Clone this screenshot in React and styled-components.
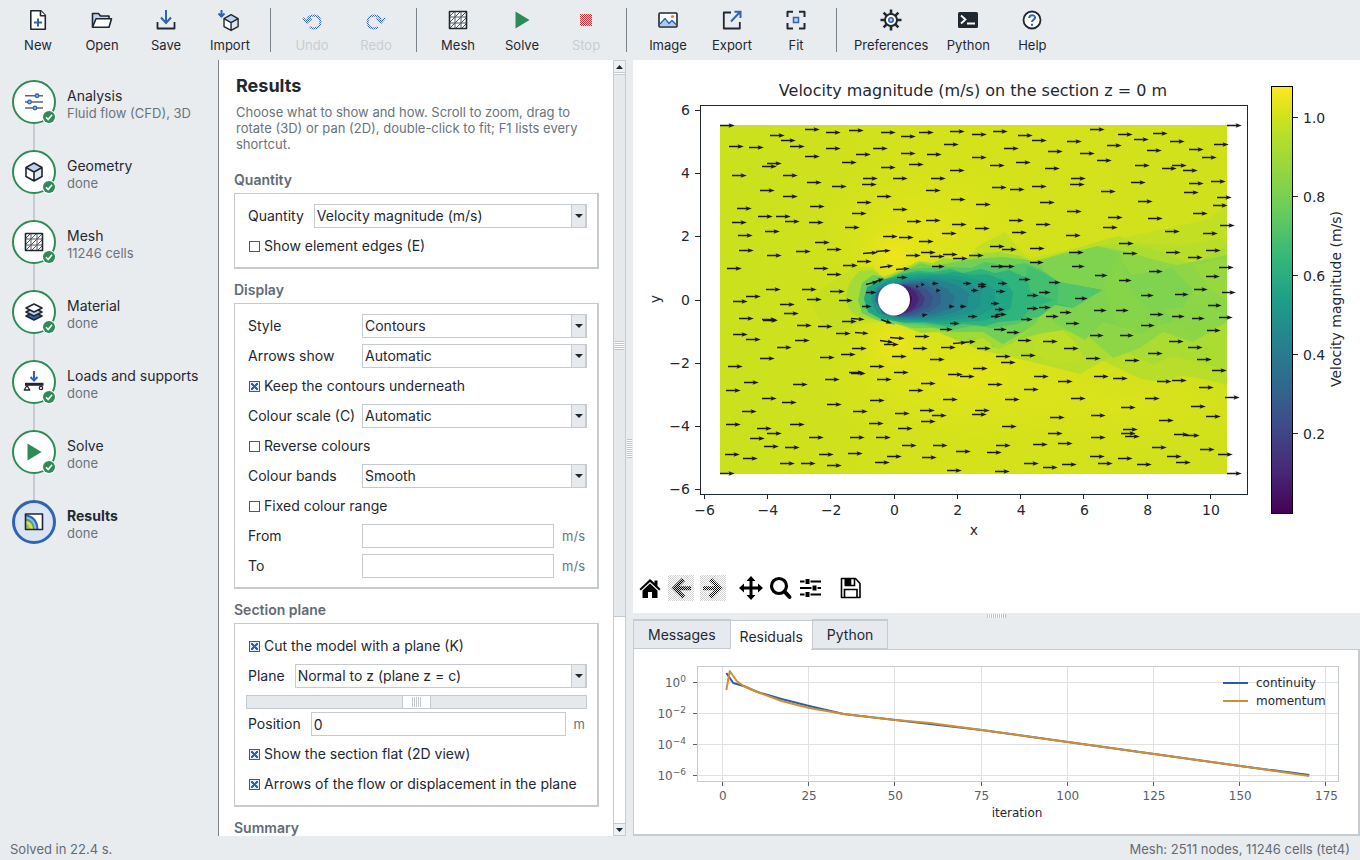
import React, { useId, useState } from 'react';
import styled, { createGlobalStyle, css } from 'styled-components';

const c = {
  bg: '#e9ecef',
  ink: '#1f2830',
  muted: '#6a737c',
  line: '#c6cbd0',
  blue: '#2f63b3',
  green: '#2e8b57',
  pale: '#bfd2f0',
};

const GlobalStyle = createGlobalStyle`
  * { box-sizing: border-box; }
  body {
    margin: 0;
    background: ${c.bg};
    color: ${c.ink};
    font-family: Inter, "Liberation Sans", sans-serif;
    font-size: 14px;
    line-height: 20px;
  }
  button, input, select { font: inherit; color: inherit; }
`;

const Shell = styled.div`
  display: flex;
  flex-direction: column;
  height: 100vh;
  overflow: hidden;
`;

const Toolbar = styled.header`
  display: flex;
  flex: none;
  height: 60px;
  padding-left: 6px;
`;

const ToolButton = styled.button`
  display: flex;
  flex-direction: column;
  align-items: center;
  min-width: 64px;
  padding: 8px 8px 0;
  border: 0;
  background: none;
  font-size: 13px;
  line-height: 26px;

  &:disabled { color: #c8cdd2; }
`;

const ToolRule = styled.span`
  width: 2px;
  height: 44px;
  margin: 8px 8px 0;
  border-left: 1px solid #7b838a;
`;

const Body = styled.div`
  display: flex;
  flex: 1;
  min-height: 0;
`;

const Steps = styled.nav`
  flex: none;
  width: 219px;
  padding: 7px 0 0 12px;
  border-right: 1px solid #7f8589;
`;

const Step = styled.a`
  position: relative;
  display: flex;
  align-items: center;
  height: 70px;
  gap: 11px;
  color: inherit;
  text-decoration: none;

  /* link to the next step */
  &:not(:last-child)::after {
    content: "";
    position: absolute;
    left: 21px;
    top: 57px;
    width: 2px;
    height: 26px;
    background: #c6cbd1;
  }
`;

const Disc = styled.span`
  position: relative;
  display: grid;
  place-items: center;
  flex: none;
  width: 44px;
  height: 44px;
  border: 2px solid ${c.green};
  border-radius: 50%;
  background: #fff;

  ${p => p.$current && css`
    border: 3px solid ${c.blue};
    background: #dbe4f3;
  `}
`;

const Badge = styled.svg`
  position: absolute;
  right: -2px;
  bottom: -2px;
`;

const StepText = styled.span`
  padding-top: 3px;
`;

const StepName = styled.span`
  display: block;
  line-height: 18px;
  font-weight: ${p => (p.$current ? 700 : 400)};
`;

const StepNote = styled.span`
  display: block;
  line-height: 16px;
  font-size: 13px;
  color: ${c.muted};
`;

const Panel = styled.section`
  flex: none;
  width: 394px;
  padding: 14px 14px 0 15px;
  overflow: hidden;
  background: #fff;
`;

const PanelTitle = styled.h1`
  margin: 0 2px 6px;
  font-size: 18px;
  font-weight: 700;
  line-height: 24px;
`;

const Intro = styled.p`
  margin: 0 2px 18px;
  font-size: 13px;
  line-height: 16px;
  color: ${c.muted};
`;

const Group = styled.fieldset`
  min-width: 0;
  margin: 0 0 11px;
  padding: 0;
  border: 0;
`;

const GroupTitle = styled.legend`
  padding: 0;
  margin-bottom: 3px;
  font-weight: 600;
  color: #626b75;
`;

const GroupBox = styled.div`
  padding: 7px 10px 6px 13px;
  border: 1px solid ${c.line};
  border-width: 1px 2px 2px 1px;
`;

const Row = styled.div`
  display: flex;
  align-items: center;
  height: 30px;
`;

const RowLabel = styled.label`
  flex: none;
  width: ${p => (p.$wide ? '104px' : 'auto')};
  margin-right: 10px;
  white-space: nowrap;
`;

const SelectWrap = styled.span`
  position: relative;
  display: flex;
  flex: 1;
  min-width: 0;
  height: 24px;
  border: 1px solid ${c.line};

  /* drop-down button on the right */
  &::after {
    content: "";
    position: absolute;
    inset: 0 0 0 auto;
    width: 13px;
    border-left: 1px solid ${c.line};
    border-right: 1px solid ${c.line};
    background: #e6eaee;
    pointer-events: none;
  }
`;

const SelectArrow = styled.i`
  position: absolute;
  z-index: 1;
  right: 3px;
  top: 9px;
  border: 4px solid transparent;
  border-top-color: ${c.ink};
  border-bottom: 0;
  pointer-events: none;
`;

const Select = styled.select`
  flex: 1;
  min-width: 0;
  padding: 0 14px 0 2px;
  border: 0;
  background: #fff;
  appearance: none;
`;

const TextInput = styled.input`
  flex: 1;
  min-width: 0;
  height: 24px;
  padding: 0 2px;
  border: 1px solid ${c.line};
  background: #fff;
`;

const Unit = styled.span`
  padding: 0 2px 0 8px;
  font-size: 13px;
  color: ${c.muted};
`;

const CheckLabel = styled.label`
  display: flex;
  align-items: center;
  gap: 4px;
  padding-left: 1px;
`;

const Check = styled.input.attrs({ type: 'checkbox' })`
  width: 11px;
  height: 11px;
  margin: 0;
  border: 1px solid #4f5962;
  background: #fff;
  appearance: none;

  &:checked {
    background:
      linear-gradient(45deg, transparent 39%, ${c.blue} 39% 61%, transparent 61%) center / 7px 7px no-repeat,
      linear-gradient(-45deg, transparent 39%, ${c.blue} 39% 61%, transparent 61%) center / 7px 7px no-repeat,
      #e3ecf8;
  }
`;

const Slider = styled.input.attrs({ type: 'range' })`
  display: block;
  width: calc(100% + 2px);
  height: 14px;
  margin: 4px 0 0 -2px;
  border: 1px solid ${c.line};
  background: #e6e9ec;
  appearance: none;

  &::-webkit-slider-thumb {
    appearance: none;
    width: 29px;
    height: 12px;
    border: solid ${c.line};
    border-width: 0 1px;
    background:
      repeating-linear-gradient(90deg, ${c.line} 0 1px, transparent 1px 2px) center / 9px 10px no-repeat,
      #fff;
  }
`;

const ScrollTrack = styled.div`
  display: flex;
  flex: none;
  flex-direction: column;
  width: 13px;
  border: solid ${c.line};
  border-width: 0 1px;
  background: #fff;
`;

const ScrollButton = styled.button`
  display: grid;
  place-items: center;
  flex: none;
  height: 13px;
  padding: 0;
  border: solid ${c.line};
  border-width: 1px 0;
  background: #eef0f3;

  &:last-child { margin-top: auto; }
`;

const ScrollThumb = styled.div`
  display: grid;
  place-items: center;
  flex: 0 1 543px;
  margin-top: 1px;
  border: solid ${c.line};
  border-width: 1px 0;
  background: #e6e9ec;
`;

const Grip = styled.span`
  width: ${p => (p.$wide ? '19px' : p.$tall ? '5px' : '9px')};
  height: ${p => (p.$wide ? '4px' : p.$tall ? '19px' : '9px')};
  background: repeating-linear-gradient(${p => (p.$wide ? '90deg' : '0deg')}, #bfc4c9 0 1px, #fff 1px 2px);
`;

const VSash = styled.div`
  display: grid;
  place-items: center;
  flex: none;
  width: 7px;
`;

const HSash = styled.div`
  display: grid;
  place-items: center;
  flex: none;
  height: 6px;
`;

const Work = styled.main`
  display: flex;
  flex: 1;
  flex-direction: column;
  min-width: 0;
`;

const PlotPane = styled.section`
  display: flex;
  flex: 1;
  flex-direction: column;
  min-height: 0;
  background: #fff;
`;

const PlotSvg = styled.svg`
  flex: 1;
  width: 100%;
  min-height: 0;
  font-family: "DejaVu Sans", sans-serif;
  font-size: 14px;
  fill: ${c.ink};
`;

const NavBar = styled.div`
  display: flex;
  align-items: center;
  gap: 6px;
  height: 40px;
  margin: 0 0 5px 5px;
`;

const NavButton = styled.button`
  display: grid;
  place-items: center;
  min-width: 24px;
  height: 26px;
  padding: 0;
  margin-left: ${p => p.$before || 0}px;
  border: 0;
  background: none;
  color: #000;

  &:disabled {
    width: 26px;
    background: repeating-conic-gradient(#d3d3d3 0 25%, #fff 0 50%) 0 0 / 2px 2px;
  }
`;

const Tabs = styled.div`
  display: flex;
  align-items: flex-end;
  height: 30px;
`;

const Tab = styled.button`
  height: 30px;
  padding: 0 14px;
  border: 1px solid ${c.line};
  border-width: ${p => (p.$active ? '1px 0 0' : '2px 1px 1px')};
  background: ${p => (p.$active ? '#fff' : '#e6eaee')};

  ${p => p.$active && css`
    height: 29px;
    padding: 4px 9px 0;
  `}
`;

const TabPane = styled.div`
  height: 187px;
  padding-top: 1px;
  border: solid ${c.line};
  border-width: 0 2px 2px 1px;
  background: linear-gradient(${c.line}, ${c.line}) top right / calc(100% - 177px) 1px no-repeat, #fff;
`;

const ResidualSvg = styled.svg`
  display: block;
  width: 100%;
  height: 184px;
  font-family: "DejaVu Sans", sans-serif;
  font-size: 12px;
  fill: #56606a;
`;

const StatusBar = styled.footer`
  display: flex;
  justify-content: space-between;
  align-items: center;
  flex: none;
  height: 24px;
  padding: 1px 10px 0;
  font-size: 13px;
  color: #626b75;
`;

/* ---- icons ---- */

const stroke = { fill: 'none', stroke: c.ink, strokeWidth: 1.6, strokeLinejoin: 'round' };
const accent = { fill: 'none', stroke: c.blue, strokeWidth: 2 };

const MeshShape = () => (
  <g {...stroke} stroke="#4d5760" strokeWidth="1">
    <rect x="3.500" y="3.500" width="17" height="17" fill="#fff" />
    <path d="M9 3v18M15 3v18M3 9h18M3 15h18" />
    <path d="M3 9l6-6M3 15L15 3M3 21L21 3M9 21L21 9M15 21l6-6" />
    <rect x="3.500" y="3.500" width="17" height="17" stroke={c.ink} strokeWidth="1.600" />
  </g>
);

const Cube = () => (
  <>
    <path d="M12 3l8 4.500v9L12 21l-8-4.500v-9z" fill="#fff" />
    <path d="M12 3l8 4.500L12 12 4 7.500z" fill={c.pale} />
    <path d="M20 7.500v9L12 21v-9z" fill="#dfe7f3" />
    <path d="M12 3l8 4.500v9L12 21l-8-4.500v-9zM4 7.500l8 4.500 8-4.500M12 12v9" {...stroke} />
  </>
);

const shapes = {
  new: (
    <>
      <path d="M4.800 2.800h10l4.500 4.500v14H4.800z" {...stroke} fill="#fff" />
      <path d="M14.500 2.800v5h5" {...stroke} fill="#fff" />
      <path d="M12 10.500v8M8 14.500h8" {...accent} />
    </>
  ),
  open: (
    <>
      <path d="M2.500 19V5.500h6l2 2.500h8.500v3" {...stroke} fill={c.pale} />
      <path d="M2.500 19.200L6 10.800h15.500L19 19.200z" {...stroke} fill="#fff" />
    </>
  ),
  save: (
    <>
      <path d="M3.500 14v6.500h17V14" {...stroke} strokeWidth="1.800" />
      <path d="M12 2v13M7 9.500l5 5.500 5-5.500" {...accent} />
    </>
  ),
  import: (
    <>
      <g transform="translate(2.500 4) scale(.88)"><Cube /></g>
      <path d="M3.500 2v6M.5 5.500l3 3 3-3" {...accent} />
    </>
  ),
  undo: <path d="M3 10l4 4.500 4.500-4M7 13.500C7.500 9 11 7.500 14 7.500c4 0 6.500 3 6.500 6.500 0 4-3 6.500-6.500 6.500-1.500 0-3-.500-4-1.500" {...accent} />,
  redo: <path d="M21 10l-4 4.500-4.500-4M17 13.500C16.500 9 13 7.500 10 7.500c-4 0-6.500 3-6.500 6.500 0 4 3 6.500 6.500 6.500 1.500 0 3-.500 4-1.500" {...accent} />,
  mesh: <MeshShape />,
  solve: <path d="M5.500 3.500v17l14-8.500z" fill={c.green} />,
  stop: <path d="M6 6h12v12H6z" fill="#c8323a" />,
  image: (
    <>
      <rect x="3" y="5" width="18" height="14" rx="1" fill="#fff" />
      <path d="M4 16l5-6 4 5 3-3 4 4v2H4z" fill="#a9cdf5" />
      <path d="M4 16l5-5.500 4 5 3-3 4 4" {...accent} strokeWidth="1.300" />
      <circle cx="16.500" cy="8.500" r="1.600" fill="#e08a1e" />
      <rect x="3" y="5" width="18" height="14" rx="1" {...stroke} />
    </>
  ),
  export: (
    <>
      <path d="M11 4.500H3.800v16h16V14" {...stroke} strokeWidth="1.800" />
      <path d="M11 13.500l9-9.500M14.500 3.800H20.500V10" {...accent} />
    </>
  ),
  fit: (
    <>
      <path d="M3.500 9V3.800H9M15 3.800h5.500V9M20.500 15v5.500H15M9 20.500H3.500V15" {...stroke} strokeWidth="2" />
      <rect x="9.500" y="9.500" width="5" height="5" {...accent} fill={c.pale} strokeWidth="1.500" />
    </>
  ),
  preferences: (
    <>
      <path d="M12 1.500v21M1.500 12h21M4.600 4.600l14.800 14.800M19.400 4.600L4.600 19.400" {...stroke} strokeWidth="2.600" />
      <circle cx="12" cy="12" r="6" {...stroke} fill="#fff" strokeWidth="2" />
      <circle cx="12" cy="12" r="2.200" {...accent} fill={c.pale} strokeWidth="1.600" />
    </>
  ),
  python: (
    <>
      <rect x="2" y="4" width="20" height="16" rx="1.500" fill={c.ink} />
      <path d="M5 7.500l4.500 4L5 15.500M11 15.500h8" fill="none" stroke="#fff" strokeWidth="1.800" />
    </>
  ),
  help: (
    <>
      <circle cx="12" cy="12" r="8.500" {...stroke} fill="#fff" strokeWidth="1.800" />
      <path d="M9.200 10c0-3.800 5.800-3.600 5.800-.300 0 2-3 2.100-3 4.300M12 15.800v2" {...accent} />
    </>
  ),
  analysis: (
    <>
      <path d="M3 5.800h18M3 12h18M3 18h18" stroke="#5c6670" strokeWidth="1.500" />
      <g {...accent} fill="#8fb6ee" strokeWidth="1.300">
        <circle cx="15" cy="5.800" r="1.800" />
        <circle cx="7.500" cy="12" r="1.800" />
        <circle cx="13" cy="18" r="1.800" />
      </g>
    </>
  ),
  geometry: <Cube />,
  material: (
    <g {...stroke}>
      <path d="M4 16l8 4 8-4-8-4z" fill={c.blue} />
      <path d="M4 12l8 4 8-4-8-4z" fill={c.pale} />
      <path d="M4 8l8 4 8-4-8-4z" fill="#fff" />
    </g>
  ),
  loads: (
    <>
      <path d="M12 1v9M8.500 7l3.500 3.500L15.500 7" {...accent} />
      <path d="M3 14.300h18.500" stroke={c.ink} strokeWidth="3" />
      <path d="M5 15.500l-2.800 4.500h5.600z" {...stroke} fill="#fff" strokeWidth="1.300" />
      <circle cx="19" cy="18" r="1.700" {...stroke} fill="#fff" strokeWidth="1.300" />
    </>
  ),
  results: (
    <>
      <rect x="3.500" y="4" width="17" height="15.500" fill="#fff" />
      <path d="M4 4.500c8 1 12 6 12.500 14.500H4z" fill={c.blue} />
      <path d="M4 6.500c6.500 1 10 5.500 10.500 12.500H4z" fill="#8fbdf0" />
      <path d="M4 8.500c5.500 1 8 4.500 8.500 10.500H4z" fill="#4ba36e" />
      <path d="M4 11c4.500.500 6.500 3.500 7 8H4z" fill="#e3d84b" />
      <path d="M4 14c2.500.500 3.500 2 4 5H4z" fill="#8fc06a" />
      <rect x="3.500" y="4" width="17" height="15.500" {...stroke} />
    </>
  ),
};

const Icon = ({ name, stippled }) => {
  const id = useId();
  return (
    <svg width="24" height="24" viewBox="0 0 24 24" aria-hidden="true">
      {stippled && (
        <defs>
          <pattern id={`${id}p`} width="2" height="2" patternUnits="userSpaceOnUse">
            <path d="M0 0h1v1H0zM1 1h1v1H1z" fill="#fff" shapeRendering="crispEdges" />
          </pattern>
          <mask id={`${id}m`}><rect width="24" height="24" fill={`url(#${id}p)`} /></mask>
        </defs>
      )}
      <g mask={stippled ? `url(#${id}m)` : undefined}>{shapes[name]}</g>
    </svg>
  );
};

/* ---- velocity plot ---- */

// tail x, tail y, length (default 14), rise at the head
const arrows = `
87,65 172,69 193,72 216,70 137,75 148,80 157,86 96,86 116,87 193,88 172,96 248,72 268,76 286,72 240,88
268,93 223,94 294,94 209,102 248,107 276,104 134,103 129,106 99,115 150,115 174,122 199,126 230,118
229,124 260,118 298,118 127,130 150,136 244,136 224,142 293,130 104,148 177,146 260,149 219,153 125,156
143,156 152,161 99,162 176,162 212,167 274,161 293,160 132,171 105,175 182,182 250,176 266,177 286,181
106,190 134,195 163,191 194,189 230,193,14,1 243,191,14,1 288,192 273,195 297,196 224,201 210,205 94,208
181,208 194,214 247,207,13,2 263,209,13,1 299,206,12 233,224,12,3 240,222,11,4 233,232,10 264,217,10
229,246,9 133,229 169,229 197,231 206,240,13 174,239 100,241 113,236 147,244 151,253 106,258 129,259
130,260 164,265 185,266 209,261 218,258,13,-1 100,274 113,279 162,280 203,273 222,272,13,-1 144,287 219,288
248,259,11,-4 282,276 247,280,13,-2 257,277,14,-1 251,284 280,288 308,287 317,71 339,74 360,71 385,75
311,84 371,88 339,97 383,102 357,105 317,110 359,127 377,129 318,139 343,144 376,160 319,164 342,168
379,172 309,173 357,186 369,189 310,194 336,195 320,198 358,206,13 369,206,12 386,219,11 365,223,9
330,223,8 345,226,8 345,224,8 338,230,7 363,231,9 299,223,6 288,224,3 303,230,4 283,226,2 289,255,5,1
316,246,5 327,246,6 358,243,8 362,249,9 394,235,11 394,248,11 335,256,9 358,256,9 363,254,10 317,263,9
307,269,12 388,259,11 361,269,12 374,272,12 385,280,13 320,283,13,1 330,282,12,1 344,288,13 399,80 434,81
457,69 485,74 501,79 520,73 537,81 594,65 581,84 556,89 569,97 474,85 514,90 415,91 447,93 464,100
502,105 539,105 529,108 550,110 412,108 438,118 437,124 399,126 498,122 578,121 556,123 468,131 551,132
584,137 580,145 407,142 505,141 434,151 560,153 475,157 515,158 470,167 587,165 403,164 532,171 570,173
433,175 486,183 397,188 436,192 490,193 533,192 573,190 555,197 397,202,13 439,206,12 586,207 516,211,13
573,216,13 462,215,12 486,220,12 416,222,11 561,229,13 406,232,11 542,234,13 508,235,12 589,232,13
442,238,12 575,245,13 461,250,12 483,250,12 517,254,13 406,247,11 427,252,11 413,256,12 539,256,12
559,258,12 586,257,13 433,263,13 508,265,13 574,270,13 457,275,13 487,275,13 536,281 555,287 410,281
431,288 208,294 187,297 127,298 95,306 237,306 259,296 297,299 363,296 388,295 368,302 453,298 515,293
492,300 564,299 340,308 579,310 216,312 218,313 261,312 315,314 327,316 401,316 244,319 461,316 192,319
111,322 160,324 288,323 355,324 425,321 480,318 524,321 539,320 93,330 276,330 391,329 566,327 129,338
237,340 149,342 194,344 310,339 372,339 438,338 512,338 592,337 558,346 220,351 109,351 262,353 287,350
342,350 339,354 299,355 488,347 573,356 93,364 157,364 236,363 288,361 417,357 458,355 526,360 124,368
265,368 369,366 134,373 117,378 490,369 488,373 492,376 541,374 552,375 415,373 176,377 217,377 243,377
458,377 131,386 152,387 269,385 300,385 363,385 400,384 425,383 519,387 567,389 92,394 110,398 186,394
215,393 323,391 354,392 254,396 289,397 457,396 485,398 534,396 585,394 147,403 168,403 194,405 242,402
314,410 362,411 391,403 410,407 429,404 465,403 504,404 543,402 87,413 594,413
`.trim().split(/\s+/).map(s => s.split(',').map(Number));

const Arrow = ({ at: [x, y, len = 14, rise = 0] }) => {
  const turn = (-Math.atan2(rise, len) * 180) / Math.PI;
  const head = Math.min(5.5, len);
  return (
    <path
      transform={`translate(${x} ${y + 0.5}) rotate(${turn})`}
      d={`M0-.7H${len - head + 1}L${len - head}-2.200L${len + 0.8} 0L${len - head} 2.200L${len - head + 1} .7H0z`}
    />
  );
};

// shaded cells of the section, from the far field to the cylinder
const cells = [
  ['#c6e021', '177,240 190,228 207,217 220,207 240,207 254,223 250,262 227,263 205,272 194,270 182,252'],
  ['#c2df23', '345,186 372,172 385,188 397,198 573,160 594,146 594,190 397,206 330,204'],
  ['#b8de29', '390,204 410,198 430,193 470,180 487,176 500,183 551,185 594,178 594,325 570,319 550,316 527,322 508,319 470,301 447,314 411,305 371,295 345,290 330,282 350,204'],
  ['#aadc32', '594,185 560,205 545,198 500,183 470,185 420,197 388,204 410,225 430,260 410,285 440,292 450,300 470,301 489,290 520,305 540,296 594,310'],
  ['#bddf26', '421,262 440,280 453,300 420,305 400,292 405,275'],
  ['#8ed645', '392,204 430,193 470,187 490,191 530,202 545,205 594,195 594,262 560,282 530,272 507,288 480,298 455,276 430,270 405,274 378,282 360,288 352,270'],
  ['#7fd34e', '397,203 465,186 484,192 498,215 540,208 560,230 541,262 500,270 470,262 452,280 420,262'],
  ['#86d549', '487,191 500,235 530,262 507,275 482,262 470,225'],
  ['#97d83f', '560,205 594,198 594,240 575,228'],
  ['#8bd646', '530,250 594,240 594,262 560,275'],
  ['#a5db36', '213,236 217,222 226,211 240,210 252,218 255,262 238,259 224,256 216,249'],
  ['#6ccd5a', '225,240 229,223 240,215 256,218 262,265 244,260 229,253'],
  ['#a0da39', '245,219 266,211 286,201 300,203 310,198 330,200 345,194 366,192 388,196 405,205 396,270 380,283 366,289 350,278 330,283 305,272 288,273 270,266 250,259'],
  ['#72d056', '247,220 266,214 287,203 300,206 317,203 340,199 370,197 396,200 410,207 404,262 391,272 370,284 350,272 320,272 300,268 280,268 264,264 250,258'],
  ['#54c568', '250,220 275,209 300,208 317,207 338,208 352,202 376,206 392,203 409,210 428,224 404,256 384,264 360,268 340,266 318,270 290,265 270,264 252,257'],
  ['#44bf70', '394,206 412,214 426,222 469,230 440,248 422,245 406,257 388,260'],
  ['#52c569', '426,222 469,230 440,248 424,243'],
  ['#2fb47c', '250,221 268,214 284,211 300,212 318,209 330,213 348,209 362,213 376,210 394,218 398,232 420,240 396,250 388,260 366,262 352,266 330,264 316,267 292,263 272,263 252,257'],
  ['#21a685', '231,239 234,227 248,220 268,216 286,213 304,214 322,212 340,215 354,214 370,220 380,232 378,248 364,257 348,261 330,262 312,264 290,262 268,262 248,259 235,252'],
  ['#1e9c89', '252,221 274,217 296,215 318,215 336,218 350,221 362,230 362,247 348,255 328,259 308,261 288,261 266,260 250,257'],
  ['#21918c', '238,240 241,229 250,223 276,219 298,217 318,218 334,222 348,231 347,247 334,254 314,258 290,260 262,259 244,253'],
  ['#26828e', '270,221 292,219 310,221 324,225 336,233 334,247 320,253 300,257 280,259 262,257 264,225'],
  ['#2c728e', '270,223 288,221 303,224 314,229 322,237 318,248 304,253 286,257 266,257'],
  ['#33638d', '242,240 244,231 252,225 270,224 286,223 298,227 308,234 308,244 298,251 282,255 264,257 250,254'],
  ['#3b528b', '270,224 282,225 293,229 300,237 298,246 288,251 272,256'],
  ['#443983', '246,240 249,231 262,223 276,226 286,230 292,238 289,246 280,251 266,256 252,252'],
  ['#482475', '268,225 276,227 283,232 286,240 282,247 274,252 264,256'],
  ['#440154', '268,227 275,230 279,238 277,246 270,252 262,255'],
];

const viridis = ['#440154', '#482878', '#3e4989', '#31688e', '#26828e', '#1f9e89', '#35b779', '#6ece58', '#b5de2b', '#d2e21b', '#fde725'];
const stops = [0, 10, 20, 30, 40, 50, 60, 72, 88, 93, 100];

const xTicks = [-6, -4, -2, 0, 2, 4, 6, 8, 10];
const yTicks = [6, 4, 2, 0, -2, -4, -6];
const px = v => 261.5 + v * 31.65;
const py = v => 239.5 - v * 31.65;
const minus = v => String(v).replace('-', '\u2212');

const VelocityPlot = () => (
  <PlotSvg viewBox="0 0 727 508" role="img" aria-label="Velocity magnitude on the section">
    <defs>
      <linearGradient id="scale" x1="0" y1="1" x2="0" y2="0">
        {viridis.map((color, i) => <stop key={color} offset={`${stops[i]}%`} stopColor={color} />)}
      </linearGradient>
      <radialGradient id="fast">
        <stop offset="0" stopColor="#f0e51c" />
        <stop offset="1" stopColor="#e3e418" stopOpacity="0" />
      </radialGradient>
      <linearGradient id="field">
        <stop offset="0" stopColor="#cbe11e" />
        <stop offset=".5" stopColor="#d5e21a" />
        <stop offset="1" stopColor="#d0e11c" />
      </linearGradient>
      <clipPath id="section"><rect x="87" y="65" width="507" height="349" /></clipPath>
    </defs>

    <text x="340" y="36" fontSize="16" textAnchor="middle">Velocity magnitude (m/s) on the section z = 0 m</text>

    <g clipPath="url(#section)">
      <rect x="87" y="65" width="507" height="349" fill="url(#field)" />
      <ellipse cx="290" cy="170" rx="110" ry="70" fill="url(#fast)" opacity=".6" />
      <ellipse cx="262" cy="195" rx="45" ry="40" fill="url(#fast)" />
      <ellipse cx="262" cy="284" rx="45" ry="42" fill="url(#fast)" />
      <ellipse cx="330" cy="320" rx="150" ry="60" fill="url(#fast)" opacity=".6" />
      <ellipse cx="490" cy="345" rx="150" ry="50" fill="url(#fast)" opacity=".3" />
      {cells.map(([fill, points]) => <polygon key={points} fill={fill} points={points} />)}
      <circle cx="261" cy="239.500" r="16" fill="#fff" />
    </g>
    <g fill="#17191c">{arrows.map((a, i) => <Arrow key={i} at={a} />)}</g>

    <rect x="67.500" y="45.500" width="547" height="389" fill="none" stroke={c.ink} />
    {xTicks.map(v => (
      <g key={v}>
        <path d={`M${Math.round(px(v)) - 0.5} 434v5`} stroke={c.ink} />
        <text x={px(v)} y="455" textAnchor="middle">{minus(v)}</text>
      </g>
    ))}
    {yTicks.map(v => (
      <g key={v}>
        <path d={`M67 ${Math.round(py(v)) + 0.5}h-5`} stroke={c.ink} />
        <text x="57" y={py(v) + 5} textAnchor="end">{minus(v)}</text>
      </g>
    ))}
    <text x="341" y="475" textAnchor="middle">x</text>
    <text transform="translate(27 239) rotate(-90)" textAnchor="middle">y</text>

    <rect x="638.500" y="26.500" width="21" height="427" fill="url(#scale)" stroke="#000" />
    {[1, 0.8, 0.6, 0.4, 0.2].map((v, i) => (
      <g key={v}>
        <path d={`M660 ${57.5 + i * 79}h5`} stroke={c.ink} />
        <text x="670" y={63 + i * 79}>{v.toFixed(1)}</text>
      </g>
    ))}
    <text transform="translate(708 239) rotate(-90)" textAnchor="middle">Velocity magnitude (m/s)</text>
  </PlotSvg>
);

/* ---- residuals ---- */

const rx = v => 88.9 + v * 3.449;
const continuity = [[1, 23], [2, 28], [3, 33], [4, 34], [6, 36], [10, 42], [17, 49], [25, 56], [35, 64], [50, 70], [60, 74], [75, 80], [100, 92], [125, 104], [150, 116], [170, 125]];
const momentum = [[1, 40], [2, 21], [4, 31], [6, 36], [10, 42], [17, 51], [25, 58], [35, 64], [50, 70], [60, 73], [75, 80], [100, 92], [125, 104], [150, 116], [170, 126]];
const line = pts => pts.map(([x, y]) => `${rx(x)},${y}`).join(' ');

const ResidualPlot = () => (
  <ResidualSvg viewBox="0 0 724 184" role="img" aria-label="Residuals against iteration">
    {[0, 25, 50, 75, 100, 125, 150, 175].map(v => (
      <g key={v}>
        <path d={`M${Math.round(rx(v)) - 0.5} 17v115`} stroke="#dfe1e3" />
        <path d={`M${Math.round(rx(v)) - 0.5} 132v4`} stroke="#56606a" />
        <text x={rx(v)} y="150" textAnchor="middle">{v}</text>
      </g>
    ))}
    {[0, -2, -4, -6].map((v, i) => (
      <g key={v}>
        <path d={`M63 ${32.5 + i * 31}h641`} stroke="#dfe1e3" />
        <path d={`M59 ${32.5 + i * 31}h4`} stroke="#56606a" />
        <text x="52" y={37 + i * 31} textAnchor="end">10<tspan dy="-5" fontSize="9">{minus(v)}</tspan></text>
      </g>
    ))}
    <rect x="63.500" y="16.500" width="641" height="115" fill="none" stroke={c.line} />
    <g fill="none" strokeWidth="2" strokeLinejoin="round">
      <polyline points={line(continuity)} stroke="#2b5ea8" />
      <polyline points={line(momentum)} stroke="#cf8f35" />
      <path d="M589 33h25" stroke="#2b5ea8" />
      <path d="M589 51h25" stroke="#cf8f35" />
    </g>
    <g fill={c.ink}>
      <text x="622" y="37">continuity</text>
      <text x="622" y="55">momentum</text>
      <text x="383" y="167" textAnchor="middle">iteration</text>
    </g>
  </ResidualSvg>
);

/* ---- page ---- */

const tools = [
  ['new', 'New'], ['open', 'Open'], ['save', 'Save'], ['import', 'Import'], null,
  ['undo', 'Undo', true], ['redo', 'Redo', true], null,
  ['mesh', 'Mesh'], ['solve', 'Solve'], ['stop', 'Stop', true], null,
  ['image', 'Image'], ['export', 'Export'], ['fit', 'Fit'], null,
  ['preferences', 'Preferences'], ['python', 'Python'], ['help', 'Help'],
];

const steps = [
  ['analysis', 'Analysis', 'Fluid flow (CFD), 3D'],
  ['geometry', 'Geometry', 'done'],
  ['mesh', 'Mesh', '11246 cells'],
  ['material', 'Material', 'done'],
  ['loads', 'Loads and supports', 'done'],
  ['solve', 'Solve', 'done'],
  ['results', 'Results', 'done'],
];

const SelectRow = ({ label, value, wide }) => {
  const id = useId();
  return (
    <Row>
      <RowLabel htmlFor={id} $wide={wide}>{label}</RowLabel>
      <SelectWrap>
        <Select id={id}><option>{value}</option></Select>
        <SelectArrow />
      </SelectWrap>
    </Row>
  );
};

const CheckRow = ({ label, on }) => (
  <Row>
    <CheckLabel><Check defaultChecked={on} />{label}</CheckLabel>
  </Row>
);

const InputRow = ({ label, value, unit, wide }) => {
  const id = useId();
  return (
    <Row>
      <RowLabel htmlFor={id} $wide={wide}>{label}</RowLabel>
      <TextInput id={id} defaultValue={value} />
      <Unit>{unit}</Unit>
    </Row>
  );
};

const ResultsPanel = () => (
  <Panel>
    <PanelTitle>Results</PanelTitle>
    <Intro>
      Choose what to show and how. Scroll to zoom, drag to rotate (3D) or pan (2D), double-click to fit; F1 lists every shortcut.
    </Intro>
    <Group>
      <GroupTitle>Quantity</GroupTitle>
      <GroupBox>
        <SelectRow label="Quantity" value="Velocity magnitude (m/s)" />
        <CheckRow label="Show element edges (E)" />
      </GroupBox>
    </Group>
    <Group>
      <GroupTitle>Display</GroupTitle>
      <GroupBox>
        <SelectRow wide label="Style" value="Contours" />
        <SelectRow wide label="Arrows show" value="Automatic" />
        <CheckRow on label="Keep the contours underneath" />
        <SelectRow wide label="Colour scale (C)" value="Automatic" />
        <CheckRow label="Reverse colours" />
        <SelectRow wide label="Colour bands" value="Smooth" />
        <CheckRow label="Fixed colour range" />
        <InputRow wide label="From" unit="m/s" />
        <InputRow wide label="To" unit="m/s" />
      </GroupBox>
    </Group>
    <Group>
      <GroupTitle>Section plane</GroupTitle>
      <GroupBox>
        <CheckRow on label="Cut the model with a plane (K)" />
        <SelectRow label="Plane" value="Normal to z (plane z = c)" />
        <Slider aria-label="Plane position" min="-6" max="6" defaultValue="0" />
        <InputRow label="Position" value="0" unit="m" />
        <CheckRow on label="Show the section flat (2D view)" />
        <CheckRow on label="Arrows of the flow or displacement in the plane" />
      </GroupBox>
    </Group>
    <Group>
      <GroupTitle>Summary</GroupTitle>
    </Group>
  </Panel>
);

const ArrowLeft = ({ flip }) => (
  <svg width="24" height="24" viewBox="0 0 24 24" aria-hidden="true">
    <defs>
      <pattern id="dots" width="2" height="2" patternUnits="userSpaceOnUse">
        <path d="M0 0h1v1H0zM1 1h1v1H1z" fill="#000" shapeRendering="crispEdges" />
      </pattern>
    </defs>
    <path
      transform={flip ? 'matrix(-1 0 0 1 24 0)' : undefined}
      d="M13 2l3 3-5.500 5.200H22v4H10.500L16 19.500l-3 3L2.500 12.200z"
      fill="url(#dots)"
    />
  </svg>
);

const PlotNav = () => (
  <NavBar>
    <NavButton aria-label="Home">
      <svg width="24" height="24" viewBox="0 0 24 24">
        <path d="M12 3L1.500 13l1.300 1.500L12 6l9.200 8.500 1.300-1.500-3-3V4.500h-3V7z" />
        <path d="M12 7.500l-7.500 7V22H10v-6h4v6h5.500v-7.500z" />
      </svg>
    </NavButton>
    <NavButton disabled aria-label="Back"><ArrowLeft /></NavButton>
    <NavButton disabled aria-label="Forward"><ArrowLeft flip /></NavButton>
    <NavButton $before={7} aria-label="Pan">
      <svg width="24" height="24" viewBox="0 0 24 24">
        <path d="M12 0l4.500 5h-3v5.500H19v-3l5 4.500-5 4.500v-3h-5.500V19h3L12 24l-4.500-5h3v-5.500H5v3L0 12l5-4.500v3h5.500V5h-3z" />
      </svg>
    </NavButton>
    <NavButton aria-label="Zoom">
      <svg width="24" height="24" viewBox="0 0 24 24" fill="none" stroke="#000">
        <circle cx="10" cy="10" r="7.500" strokeWidth="3.200" />
        <path d="M15.500 15.500l5 5.500" strokeWidth="4" strokeLinecap="round" />
      </svg>
    </NavButton>
    <NavButton aria-label="Configure subplots">
      <svg width="24" height="24" viewBox="0 0 24 24">
        <path d="M1 4.500h21v2H1zM1 11h21v2H1zM1 17.500h21v2H1z" />
        <path d="M6 2.500h5v6H6zM13 9h5v6h-5zM6 15.500h5v6H6z" stroke="#fff" />
      </svg>
    </NavButton>
    <NavButton $before={10} aria-label="Save figure">
      <svg width="24" height="24" viewBox="0 0 24 24" fill="none" stroke="#000" strokeWidth="1.600">
        <path d="M2.500 2.500h14l4.500 5v14H2.500z" strokeLinejoin="round" />
        <path d="M5.500 21v-7.500H18V21" />
        <path d="M6.500 3v6.500h9V3" />
        <path d="M6.500 3h5v6h-5z" fill="#000" />
      </svg>
    </NavButton>
  </NavBar>
);

const App = () => {
  const [tab, setTab] = useState('Residuals');
  return (
    <>
      <GlobalStyle />
      <Shell>
        <Toolbar>
          {tools.map((t, i) => (t ? (
            <ToolButton key={t[0]} disabled={t[2]}>
              <Icon name={t[0]} stippled={t[2]} />
              {t[1]}
            </ToolButton>
          ) : <ToolRule key={i} />))}
        </Toolbar>
        <Body>
          <Steps>
            {steps.map(([icon, name, note]) => {
              const current = name === 'Results';
              return (
                <Step key={name} href={`#${icon}`}>
                  <Disc $current={current}>
                    <Icon name={icon} />
                    {!current && (
                      <Badge width="14" height="14" viewBox="0 0 14 14">
                        <circle cx="7" cy="7" r="7" fill="#fff" />
                        <circle cx="7" cy="7" r="6" fill={c.green} />
                        <path d="M4 7.200l2.200 2.300L10 4.800" fill="none" stroke="#fff" strokeWidth="1.600" />
                      </Badge>
                    )}
                  </Disc>
                  <StepText>
                    <StepName $current={current}>{name}</StepName>
                    <StepNote>{note}</StepNote>
                  </StepText>
                </Step>
              );
            })}
          </Steps>
          <ResultsPanel />
          <ScrollTrack>
            <ScrollButton aria-label="Scroll up">
              <svg width="7" height="4"><path d="M0 4h7L3.500 0z" fill={c.ink} /></svg>
            </ScrollButton>
            <ScrollThumb><Grip /></ScrollThumb>
            <ScrollButton aria-label="Scroll down">
              <svg width="7" height="4"><path d="M0 0h7L3.500 4z" fill={c.ink} /></svg>
            </ScrollButton>
          </ScrollTrack>
          <VSash><Grip $tall /></VSash>
          <Work>
            <PlotPane>
              <VelocityPlot />
              <PlotNav />
            </PlotPane>
            <HSash><Grip $wide /></HSash>
            <Tabs role="tablist">
              {['Messages', 'Residuals', 'Python'].map(name => (
                <Tab key={name} role="tab" aria-selected={tab === name} $active={tab === name} onClick={() => setTab(name)}>
                  {name}
                </Tab>
              ))}
            </Tabs>
            <TabPane role="tabpanel" aria-label={tab}>
              {tab === 'Residuals' && <ResidualPlot />}
            </TabPane>
          </Work>
        </Body>
        <StatusBar>
          <span>Solved in 22.4 s.</span>
          <span>Mesh: 2511 nodes, 11246 cells (tet4)</span>
        </StatusBar>
      </Shell>
    </>
  );
};

export default App;
